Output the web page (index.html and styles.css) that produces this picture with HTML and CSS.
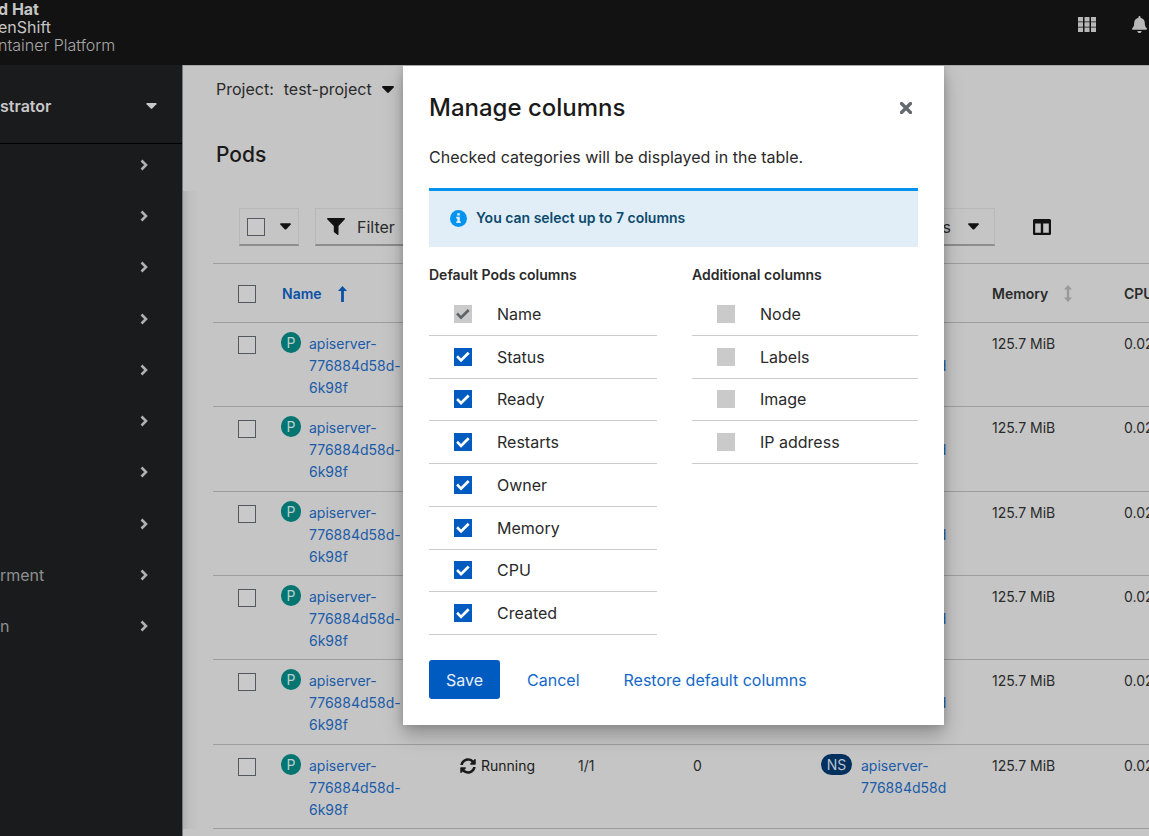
FILE: index.html
```html
<!DOCTYPE html>
<html lang="en">
<head>
<meta charset="utf-8">
<meta name="viewport" content="width=device-width, initial-scale=1">
<title>Manage columns</title>
<link rel="stylesheet" href="styles.css">
</head>
<body>
<svg class="sprite" aria-hidden="true">
  <symbol id="caret" viewBox="0 0 12 7"><path d="M1 0h10c.9 0 1.200.8.7 1.400L6.900 6.500c-.5.5-1.300.5-1.800 0L.3 1.400C-.2.8.1 0 1 0z"/></symbol>
  <symbol id="chevron" viewBox="0 0 8 12"><path d="M1.500 1.500 6 6l-4.500 4.500" fill="none" stroke="currentColor" stroke-width="2.600"/></symbol>
  <symbol id="sync" viewBox="0 0 512 512"><path d="M370.720 133.280C339.458 104.008 298.888 87.962 255.848 88c-77.458.068-144.328 53.178-162.791 126.850-1.344 5.363-6.122 9.150-11.651 9.150H24.103c-7.498 0-13.194-6.807-11.807-14.176C33.933 94.924 134.813 8 256 8c66.448 0 126.791 26.136 171.315 68.685L463.030 40.970C478.149 25.851 504 36.559 504 57.941V192c0 13.255-10.745 24-24 24H345.941c-21.382 0-32.090-25.851-16.971-40.971l41.750-41.749zM32 296h134.059c21.382 0 32.090 25.851 16.971 40.971l-41.750 41.750c31.262 29.273 71.835 45.319 114.876 45.280 77.418-.070 144.315-53.144 162.787-126.849 1.344-5.363 6.122-9.150 11.651-9.150h57.304c7.498 0 13.194 6.807 11.807 14.176C478.067 417.076 377.187 504 256 504c-66.448 0-126.791-26.136-171.315-68.685L48.970 471.030C33.851 486.149 8 475.441 8 454.059V320c0-13.255 10.745-24 24-24z"/></symbol>
</svg>
<header class="masthead">
  <div class="brand">
    <strong>d Hat</strong>
    <span>enShift</span>
    <span class="brand-light">ntainer Platform</span>
  </div>
  <div class="tools">
    <button class="plain" type="button" aria-label="Applications">
      <svg width="18" height="15" viewBox="0 0 18 15"><path d="M0 0h5v4.400H0zM6.500 0h5v4.400h-5zM13 0h5v4.400h-5zM0 5.300h5v4.400H0zM6.500 5.300h5v4.400h-5zM13 5.300h5v4.400h-5zM0 10.600h5V15H0zM6.500 10.600h5V15h-5zM13 10.600h5V15h-5z"/></svg>
    </button>
    <button class="plain" type="button" aria-label="Notifications">
      <svg width="15" height="17" viewBox="0 0 448 512"><path d="M224 512c35.320 0 63.970-28.650 63.970-64H160.030c0 35.350 28.650 64 63.970 64zm215.390-149.710c-19.320-20.760-55.470-51.990-55.470-154.290 0-77.700-54.480-139.900-127.940-155.160V32c0-17.670-14.320-32-31.980-32s-31.980 14.330-31.980 32v20.840C118.560 68.100 64.080 130.300 64.080 208c0 102.300-36.150 133.530-55.470 154.290-6 6.450-8.660 14.160-8.610 21.710.11 16.400 12.980 32 32.100 32h383.800c19.120 0 32-15.600 32.100-32 .05-7.550-2.610-15.270-8.610-21.710z"/></svg>
    </button>
  </div>
</header>
<div class="shell">
  <nav class="sidebar">
    <button class="perspective" type="button"><span>strator</span><svg width="11" height="6"><use href="#caret"/></svg></button>
    <div class="nav-list">
      <button class="nav-item" type="button" aria-label="Expand section 1"><svg width="8" height="12"><use href="#chevron"/></svg></button>
      <button class="nav-item" type="button" aria-label="Expand section 2"><svg width="8" height="12"><use href="#chevron"/></svg></button>
      <button class="nav-item" type="button" aria-label="Expand section 3"><svg width="8" height="12"><use href="#chevron"/></svg></button>
      <button class="nav-item" type="button" aria-label="Expand section 4"><svg width="8" height="12"><use href="#chevron"/></svg></button>
      <button class="nav-item" type="button" aria-label="Expand section 5"><svg width="8" height="12"><use href="#chevron"/></svg></button>
      <button class="nav-item" type="button" aria-label="Expand section 6"><svg width="8" height="12"><use href="#chevron"/></svg></button>
      <button class="nav-item" type="button" aria-label="Expand section 7"><svg width="8" height="12"><use href="#chevron"/></svg></button>
      <button class="nav-item" type="button" aria-label="Expand section 8"><svg width="8" height="12"><use href="#chevron"/></svg></button>
      <button class="nav-item" type="button"><span>rment</span><svg width="8" height="12"><use href="#chevron"/></svg></button>
      <button class="nav-item" type="button"><span>n</span><svg width="8" height="12"><use href="#chevron"/></svg></button>
    </div>
  </nav>
  <main class="content">
    <div class="page-head">
      <button class="project" type="button"><span>Project:</span><span>test-project</span><svg width="12" height="7"><use href="#caret"/></svg></button>
      <h1>Pods</h1>
    </div>
    <div class="page-body">
      <div class="toolbar">
        <div class="control bulk">
          <input class="box" type="checkbox" aria-label="Select all pods">
          <button class="plain" type="button" aria-label="Selection options"><svg width="11" height="7"><use href="#caret"/></svg></button>
        </div>
        <button class="control filter" type="button"><svg width="18" height="17" viewBox="0 0 18 17"><path d="M.8 0h16.400c.8 0 1 .7.6 1.200L11.500 8v8.300c0 .6-.6.9-1.100.5l-3-2.200c-.4-.3-.6-.6-.6-1.100V8L.2 1.200C-.2.700.1 0 .8 0z"/></svg><span>Filter</span></button>
        <button class="control other" type="button"><span>s</span><svg width="11" height="7"><use href="#caret"/></svg></button>
        <button class="plain columns-btn" type="button" aria-label="Manage columns"><svg width="18" height="16" viewBox="0 0 18 16"><path fill-rule="evenodd" d="M1.700 0h14.600C17.300 0 18 .7 18 1.600v12.800c0 .9-.7 1.600-1.700 1.600H1.700C.7 16 0 15.300 0 14.400V1.600C0 .7.7 0 1.700 0zM2.200 4.500V13.700H7.800V4.500zM10.200 4.500V13.700H15.800V4.500z"/></svg></button>
      </div>
      <div class="table-wrap">
        <table class="pods">
          <colgroup><col class="c-check"><col class="c-name"><col class="c-status"><col class="c-ready"><col class="c-restarts"><col class="c-owner"><col class="c-memory"><col></colgroup>
          <thead>
            <tr>
              <th><input class="box" type="checkbox" aria-label="Select all"></th>
              <th class="sorted">Name<svg class="sort" width="9" height="16" viewBox="0 0 9 16"><path d="M4.500 0 9 5H5.900v11H3.100V5H0z"/></svg></th>
              <th></th><th></th><th></th><th></th>
              <th>Memory<svg class="sort idle" width="8" height="17" viewBox="0 0 8 17"><path d="M4 0l4 4.500H5.200v8H8L4 17l-4-4.500h2.800v-8H0z"/></svg></th>
              <th>CPU</th>
            </tr>
          </thead>
          <tbody>
            <tr><td><input class="box" type="checkbox" aria-label="Select pod 1"></td><td><div class="res"><span class="badge">P</span><a href="#">apiserver-776884d58d-6k98f</a></div></td><td></td><td></td><td></td><td><div class="res owner"><span class="badge ns">NS</span><a href="#">apiserver-776884d58d</a></div></td><td>125.7 MiB</td><td>0.02</td></tr>
            <tr><td><input class="box" type="checkbox" aria-label="Select pod 2"></td><td><div class="res"><span class="badge">P</span><a href="#">apiserver-776884d58d-6k98f</a></div></td><td></td><td></td><td></td><td><div class="res owner"><span class="badge ns">NS</span><a href="#">apiserver-776884d58d</a></div></td><td>125.7 MiB</td><td>0.02</td></tr>
            <tr><td><input class="box" type="checkbox" aria-label="Select pod 3"></td><td><div class="res"><span class="badge">P</span><a href="#">apiserver-776884d58d-6k98f</a></div></td><td></td><td></td><td></td><td><div class="res owner"><span class="badge ns">NS</span><a href="#">apiserver-776884d58d</a></div></td><td>125.7 MiB</td><td>0.02</td></tr>
            <tr><td><input class="box" type="checkbox" aria-label="Select pod 4"></td><td><div class="res"><span class="badge">P</span><a href="#">apiserver-776884d58d-6k98f</a></div></td><td></td><td></td><td></td><td><div class="res owner"><span class="badge ns">NS</span><a href="#">apiserver-776884d58d</a></div></td><td>125.7 MiB</td><td>0.02</td></tr>
            <tr><td><input class="box" type="checkbox" aria-label="Select pod 5"></td><td><div class="res"><span class="badge">P</span><a href="#">apiserver-776884d58d-6k98f</a></div></td><td></td><td></td><td></td><td><div class="res owner"><span class="badge ns">NS</span><a href="#">apiserver-776884d58d</a></div></td><td>125.7 MiB</td><td>0.02</td></tr>
            <tr><td><input class="box" type="checkbox" aria-label="Select pod 6"></td><td><div class="res"><span class="badge">P</span><a href="#">apiserver-776884d58d-6k98f</a></div></td><td><div class="status"><svg width="16" height="16"><use href="#sync"/></svg>Running</div></td><td>1/1</td><td>0</td><td><div class="res owner"><span class="badge ns">NS</span><a href="#">apiserver-776884d58d</a></div></td><td>125.7 MiB</td><td>0.02</td></tr>
          </tbody>
        </table>
      </div>
    </div>
    <div class="overlay">
      <section class="modal" role="dialog" aria-labelledby="modal-title">
        <div class="modal-head">
          <h2 id="modal-title">Manage columns</h2>
          <button class="plain close" type="button" aria-label="Close"><svg width="12" height="12" viewBox="0 0 12 12"><path d="M1.500 1.500l9 9M10.500 1.500l-9 9" stroke="currentColor" stroke-width="3.400" stroke-linecap="round"/></svg></button>
        </div>
        <p class="lead">Checked categories will be displayed in the table.</p>
        <div class="alert">
          <svg width="17" height="17" viewBox="0 0 17 17"><circle cx="8.500" cy="8.500" r="8.500" fill="#0494f0"/><path fill="#e1eef8" d="M7.200 3.200h2.600v2.400H7.200zM6.200 6.800h3.600v4.600h1.100V13H6.200v-1.600h1.100V8.400H6.200z"/></svg>
          <strong>You can select up to 7 columns</strong>
        </div>
        <div class="lists">
          <fieldset>
            <legend>Default Pods columns</legend>
            <div class="options">
              <label><input class="tick" type="checkbox" checked disabled>Name</label>
              <label><input class="tick" type="checkbox" checked>Status</label>
              <label><input class="tick" type="checkbox" checked>Ready</label>
              <label><input class="tick" type="checkbox" checked>Restarts</label>
              <label><input class="tick" type="checkbox" checked>Owner</label>
              <label><input class="tick" type="checkbox" checked>Memory</label>
              <label><input class="tick" type="checkbox" checked>CPU</label>
              <label><input class="tick" type="checkbox" checked>Created</label>
            </div>
          </fieldset>
          <fieldset>
            <legend>Additional columns</legend>
            <div class="options short">
              <label><input class="tick" type="checkbox" disabled>Node</label>
              <label><input class="tick" type="checkbox" disabled>Labels</label>
              <label><input class="tick" type="checkbox" disabled>Image</label>
              <label><input class="tick" type="checkbox" disabled>IP address</label>
            </div>
          </fieldset>
        </div>
        <div class="actions">
          <button class="save" type="button">Save</button>
          <button class="text-btn" type="button">Cancel</button>
          <button class="text-btn restore" type="button">Restore default columns</button>
        </div>
      </section>
    </div>
  </main>
</div>
</body>
</html>
```
FILE: styles.css
```css
* { box-sizing: border-box; }
body {
  margin: 0;
  height: 100vh;
  display: flex;
  flex-direction: column;
  overflow: hidden;
  background: #c5c5c5;
  color: #2a2a2a;
  font: 16px/24px Inter, "Liberation Sans", sans-serif;
}
button, input { margin: 0; font: inherit; color: inherit; }
button { padding: 0; border: 0; background: none; text-align: left; cursor: pointer; }
svg { display: block; flex: none; fill: currentColor; }
a { color: #1b5ba8; text-decoration: none; }
.sprite { position: absolute; width: 0; height: 0; }
.plain { display: flex; align-items: center; justify-content: center; }

.masthead {
  flex: none;
  display: flex;
  justify-content: space-between;
  height: 65px;
  background: #121212;
  color: #c5c5c5;
}
.brand { display: flex; flex-direction: column; margin-left: -2px; line-height: 18px; }
.brand-light { color: #a8a8a8; font-weight: 300; }
.tools { display: flex; gap: 36px; align-items: flex-start; padding: 16px 2px 0 0; }
.tools .plain { height: 17px; color: #b8b8b8; }

.shell { flex: 1; display: flex; min-height: 0; }
.sidebar { flex: none; width: 183px; background: #1a1b1d; border-right: 1px solid #77787a; color: #8e8f90; }
.perspective {
  display: flex;
  align-items: center;
  justify-content: space-between;
  width: 100%;
  height: 79px;
  padding: 3px 25px 0 0;
  border-bottom: 1px solid #000;
  color: #c8c8c8;
  font-weight: 600;
}
.nav-list { display: flex; flex-direction: column; justify-content: space-between; min-height: 503px; }
.nav-item { display: flex; align-items: center; justify-content: space-between; height: 42px; padding-right: 34px; }
.nav-item svg { margin-left: auto; color: #b0b0b0; }

.content { position: relative; flex: 1; min-width: 0; overflow: hidden; border-top: 1px solid #a8a8a8; }
.page-head { height: 125px; padding: 11px 33px 0; }
.project { display: flex; align-items: center; gap: 10px; }
.project svg { color: #121212; }
h1 { margin: 41px 0 0; font-size: 21px; line-height: 26px; font-weight: 500; color: #1a1a1a; }
.page-body { padding: 17px 0 0 30px; background: linear-gradient(to right, #b2b2b2, #bebebe 6px, #c5c5c5 16px); }
.toolbar { display: flex; gap: 16px; align-items: center; padding: 0 98px 0 26px; }
.control {
  display: flex;
  align-items: center;
  height: 38px;
  padding: 0 7px;
  border: 1px solid #b8b8b8;
  border-bottom: 2px solid #8c8c8c;
}
.control svg { color: #121212; }
.bulk { width: 60px; justify-content: space-between; }
.filter { width: 120px; gap: 12px; padding-left: 11px; }
.other { width: 120px; gap: 17px; margin-left: auto; padding-right: 15px; justify-content: flex-end; }
.columns-btn { margin-left: 22px; color: #121212; }
.box {
  appearance: none;
  display: block;
  flex: none;
  width: 18px;
  height: 18px;
  border: 1px solid #55585c;
  background: #c9c9c9;
}

.table-wrap { margin-top: 17px; overflow: hidden; }
.pods { width: 100%; height: 566px; table-layout: fixed; border-collapse: collapse; font-size: 14px; line-height: 22px; }
.c-check { width: 69px; }
.c-name { width: 178px; }
.c-status { width: 118px; }
.c-ready { width: 115px; }
.c-restarts { width: 129px; }
.c-owner { width: 170px; }
.c-memory { width: 132px; }
th, td { padding: 0; text-align: left; white-space: nowrap; border-top: 1px solid #9e9e9e; }
tbody tr:last-child td { border-bottom: 1px solid #9e9e9e; }
th { height: 59px; padding-top: 2px; font-weight: 600; vertical-align: middle; }
td { height: 84px; padding-top: 10px; vertical-align: top; }
th:first-child, td:first-child { padding-left: 25px; }
td:first-child { padding-top: 13px; }
.sorted { color: #0a51a5; }
.sort { display: inline-block; margin: -3px 0 0 16px; vertical-align: middle; }
.idle { color: #999; }
.res { display: flex; gap: 8px; width: 125px; margin-left: -1px; white-space: normal; }
.owner { width: 140px; gap: 9px; }
.badge { flex: none; width: 20px; height: 21px; margin-top: -1px; border-radius: 11px; background: #047571; color: #b9d0cf; text-align: center; line-height: 21px; }
.badge.ns { width: 31px; background: #03315f; color: #b8c4d0; }
.status { display: flex; align-items: center; gap: 5px; color: #1a1a1a; }

.overlay { position: absolute; top: 0; left: 15px; right: 0; display: flex; justify-content: center; pointer-events: none; }
.modal {
  pointer-events: auto;
  width: 100%;
  max-width: 541px;
  padding: 26px;
  background: #fff;
  box-shadow: 0 10px 18px rgba(0, 0, 0, .26), 0 0 8px rgba(0, 0, 0, .16);
}
.modal-head { display: flex; align-items: center; justify-content: space-between; height: 32px; }
h2 { margin: 0; font-size: 24px; line-height: 32px; font-weight: 500; color: #1a1a1a; }
.close { margin-right: 6px; color: #666a6e; }
.lead { margin: 21px 0 19px; }
.alert {
  display: flex;
  align-items: center;
  gap: 9px;
  min-height: 59px;
  padding: 0 21px 2px;
  border-top: 3px solid #0494f0;
  background: #e1eef8;
  color: #0c4a6c;
  font-size: 14px;
}
.alert strong { font-weight: 600; }
.lists { display: grid; grid-template-columns: 228fr 226fr; gap: 35px; margin-top: 16px; }
fieldset { min-width: 0; margin: 0; padding: 0; border: 0; }
legend { padding: 0; font-size: 14px; line-height: 24px; font-weight: 600; }
.options { display: grid; grid-auto-rows: 1fr; min-height: 342px; margin-top: 6px; }
.options.short { min-height: 171px; }
.options label { display: flex; align-items: center; gap: 25px; padding-left: 25px; border-bottom: 1px solid #ccc; }
.tick { appearance: none; display: block; flex: none; width: 18px; height: 18px; background: #005bc0; color: #fff; }
.tick:disabled { background: #cacaca; color: #60646a; }
.tick:checked::before {
  content: "";
  display: block;
  width: 18px;
  height: 18px;
  background: currentColor;
  clip-path: polygon(12% 54%, 22% 43%, 39% 60%, 76% 23%, 87% 34%, 39% 81%);
}
.actions { display: flex; align-items: center; margin-top: 25px; }
.save { height: 39px; padding: 0 17px; border-radius: 3px; background: #005bc0; color: #e6f0fa; }
.text-btn { margin-left: 27px; color: #1469c7; }
.restore { margin-left: 44px; }
```
